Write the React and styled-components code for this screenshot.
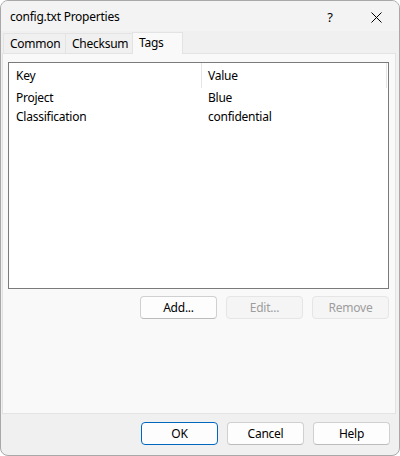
import React from "react";
import styled, { createGlobalStyle } from "styled-components";

const Global = createGlobalStyle`
  html, body { margin: 0; padding: 0; background: #ffffff; }
  * { box-sizing: border-box; }
`;

const FONT = `"Segoe UI", "Noto Sans", "Open Sans", sans-serif`;

const Window = styled.div`
  width: 400px;
  height: 456px;
  border: 1px solid #a8a8a8;
  border-radius: 8px;
  background: #f0f0f0;
  display: flex;
  flex-direction: column;
  font-family: ${FONT};
  font-size: 12px;
  letter-spacing: -0.25px;
  color: #000;
  overflow: hidden;
`;

const TitleBar = styled.div`
  height: 30px;
  display: flex;
  align-items: center;
  padding-left: 9px;
  background: #f3f3f3;
`;

const Title = styled.div`
  flex: 1;
  line-height: 16px;
  padding-top: 2px;
`;

const CaptionButton = styled.div`
  width: ${(p) => p.$w}px;
  height: 30px;
  display: flex;
  align-items: center;
  justify-content: center;
  font-size: 13px;
  padding-top: 2px;
`;

const TabStrip = styled.div`
  display: flex;
  align-items: flex-end;
  height: 22px;
  padding-left: 2px;
`;

const Tab = styled.div`
  width: ${(p) => p.$w}px;
  height: ${(p) => (p.$active ? 22 : 20)}px;
  padding-left: 6px;
  margin-right: -1px;
  border: 1px solid #e3e3e3;
  border-bottom: none;
  background: ${(p) => (p.$active ? "#f9f9f9" : "#f0f0f0")};
  display: flex;
  align-items: ${(p) => (p.$active ? "flex-start" : "center")};
  padding-top: ${(p) => (p.$active ? 2 : 0)}px;
  line-height: 16px;
  position: relative;
  z-index: ${(p) => (p.$active ? 2 : 1)};
  margin-bottom: ${(p) => (p.$active ? -1 : 0)}px;
`;

const Panel = styled.div`
  margin: 0 3px 0 1px;
  height: 361px;
  border: 1px solid #e3e3e3;
  background: #f9f9f9;
  padding: 8px 6px 0 5px;
  display: flex;
  flex-direction: column;
  position: relative;
  z-index: 1;
`;

const ListView = styled.div`
  height: 227px;
  border: 1px solid #7a7a7a;
  background: #ffffff;
  display: flex;
  flex-direction: column;
`;

const HeaderRow = styled.div`
  display: grid;
  grid-template-columns: 193px 185px 1fr;
  height: 25px;
`;

const HeaderCell = styled.div`
  padding-left: ${(p) => p.$pad}px;
  display: flex;
  align-items: center;
  border-right: 1px solid ${(p) => (p.$line ? "#e5e5e5" : "transparent")};
  line-height: 16px;
`;

const Row = styled.div`
  display: grid;
  grid-template-columns: 193px 1fr;
  height: 19px;
  align-items: center;
  line-height: 16px;
`;

const Cell = styled.div`
  padding-left: ${(p) => p.$pad}px;
  white-space: nowrap;
`;

const ButtonRow = styled.div`
  display: flex;
  justify-content: flex-end;
  gap: 9px;
  padding-top: ${(p) => p.$top}px;
  padding-right: ${(p) => p.$right}px;
`;

const Button = styled.div`
  width: 77px;
  height: 23px;
  border-radius: 4px;
  border: 1px solid ${(p) => (p.$default ? "#0067c0" : p.$disabled ? "#e5e5e5" : "#d0d0d0")};
  border-bottom-color: ${(p) => (p.$default ? "#0067c0" : p.$disabled ? "#e5e5e5" : "#bbbbbb")};
  background: ${(p) => (p.$disabled ? "#f5f5f5" : "#fdfdfd")};
  color: ${(p) => (p.$disabled ? "#9d9d9d" : "#000")};
  display: flex;
  align-items: center;
  justify-content: center;
  line-height: 16px;
`;

const Footer = styled(ButtonRow)``;

export default function App() {
  return (
    <>
      <Global />
      <Window>
        <TitleBar>
          <Title>config.txt Properties</Title>
          <CaptionButton $w={46}>?</CaptionButton>
          <CaptionButton $w={46}>
            <svg width="11" height="11" viewBox="0 0 11 11">
              <path d="M0.5 0.5 L10.5 10.5 M10.5 0.5 L0.5 10.5" stroke="#000" strokeWidth="1" />
            </svg>
          </CaptionButton>
        </TitleBar>
        <TabStrip>
          <Tab $w={63}>Common</Tab>
          <Tab $w={68}>Checksum</Tab>
          <Tab $w={51} $active>Tags</Tab>
        </TabStrip>
        <Panel>
          <ListView>
            <HeaderRow>
              <HeaderCell $pad={7} $line>Key</HeaderCell>
              <HeaderCell $pad={6} $line>Value</HeaderCell>
              <HeaderCell $pad={0} />
            </HeaderRow>
            <Row>
              <Cell $pad={7}>Project</Cell>
              <Cell $pad={6}>Blue</Cell>
            </Row>
            <Row>
              <Cell $pad={7}>Classification</Cell>
              <Cell $pad={6}>confidential</Cell>
            </Row>
          </ListView>
          <ButtonRow $top={7} $right={0}>
            <Button>Add...</Button>
            <Button $disabled>Edit...</Button>
            <Button $disabled>Remove</Button>
          </ButtonRow>
        </Panel>
        <Footer $top={8} $right={9}>
          <Button $default>OK</Button>
          <Button>Cancel</Button>
          <Button>Help</Button>
        </Footer>
      </Window>
    </>
  );
}
